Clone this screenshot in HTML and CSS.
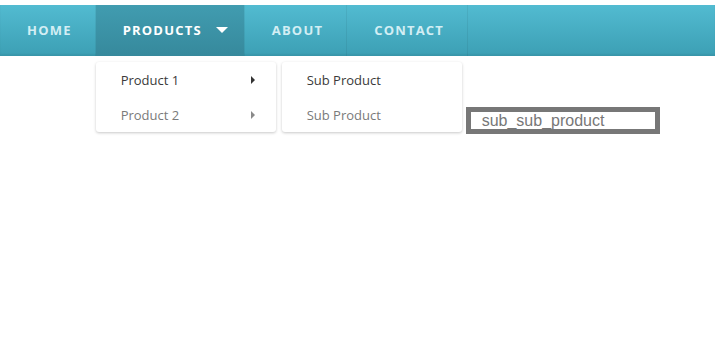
FILE: index.html
```html
<!DOCTYPE html>
<html lang="en">

<head>
    <meta charset="UTF-8">
    <meta name="viewport" content="width=device-width, initial-scale=1.0">
    <title>Menu</title>
    <link rel="stylesheet" href="styles.css">
</head>

<body>
    <nav class="navbar">
        <ul class="nav-list">
            <li class="nav-item"><a href="#">Home</a></li>
            <li class="nav-item active">
                <a href="#">Products <span class="caret"></span></a>
                <ul class="dropdown">
                    <li class="drop-item has-sub">
                        <a href="#">Product 1 <span class="arrow"></span></a>
                        <ul class="dropdown sub">
                            <li class="drop-item">
                                <a href="#">Sub Product</a>
                                <div class="sub-sub">sub_sub_product</div>
                            </li>
                            <li class="drop-item muted"><a href="#">Sub Product</a></li>
                        </ul>
                    </li>
                    <li class="drop-item has-sub muted">
                        <a href="#">Product 2 <span class="arrow"></span></a>
                    </li>
                </ul>
            </li>
            <li class="nav-item"><a href="#">About</a></li>
            <li class="nav-item"><a href="#">Contact</a></li>
        </ul>
    </nav>
</body>

</html>
```

FILE: styles.css
```css
html,
body {
    min-height: 100%;
}

body {
    margin: 0;
    padding-top: 5px;
    min-height: 100vh;
    box-sizing: border-box;
    font-family: "Open Sans", Arial, sans-serif;
    background-color: #fff;
}

.navbar {
    height: 51px;
    background: linear-gradient(to bottom, #52bbd1, #3c9fb4);
    box-shadow: inset 0 -2px 2px rgba(0, 0, 0, 0.06);
}

.nav-list {
    display: flex;
    margin: 0;
    padding: 0;
    list-style: none;
}

.nav-item {
    position: relative;
    border-right: 1px solid rgba(0, 0, 0, 0.06);
}

.nav-item > a {
    display: flex;
    align-items: center;
    height: 51px;
    box-sizing: border-box;
    padding: 0 23px 2px 27px;
    font-size: 13px;
    font-weight: 700;
    letter-spacing: 1.2px;
    text-transform: uppercase;
    text-decoration: none;
    color: #d3eef4;
}

.nav-item.active > a {
    padding-right: 16px;
    color: #fff;
    background: linear-gradient(to bottom, #419cb0, #36899c);
}

.caret {
    display: inline-block;
    margin-left: 14px;
    border-left: 6px solid transparent;
    border-right: 6px solid transparent;
    border-top: 6px solid #fff;
}

.dropdown {
    position: absolute;
    top: 57px;
    left: 0;
    width: 180px;
    margin: 0;
    padding: 0;
    list-style: none;
    background-color: #fff;
    border-radius: 3px;
    box-shadow: 0 1px 3px rgba(0, 0, 0, 0.22);
    z-index: 10;
}

.dropdown.sub {
    top: 0;
    left: 186px;
}

.drop-item {
    position: relative;
}

.drop-item > a {
    display: flex;
    align-items: center;
    justify-content: space-between;
    height: 35px;
    padding: 0 21px 0 25px;
    font-size: 13px;
    text-decoration: none;
    color: #3a3a3a;
}

.drop-item.muted > a {
    color: #7a7a7a;
}

.arrow {
    border-top: 4px solid transparent;
    border-bottom: 4px solid transparent;
    border-left: 4px solid #333;
}

.drop-item.muted .arrow {
    border-left-color: #8a8a8a;
}

.sub-sub {
    position: absolute;
    top: 45px;
    left: 184px;
    width: 173px;
    height: 17px;
    padding-left: 11px;
    border: 5px solid #777;
    font-family: "Liberation Sans", Arial, sans-serif;
    font-size: 16px;
    line-height: 17px;
    color: #777;
    background-color: #fff;
}
```
